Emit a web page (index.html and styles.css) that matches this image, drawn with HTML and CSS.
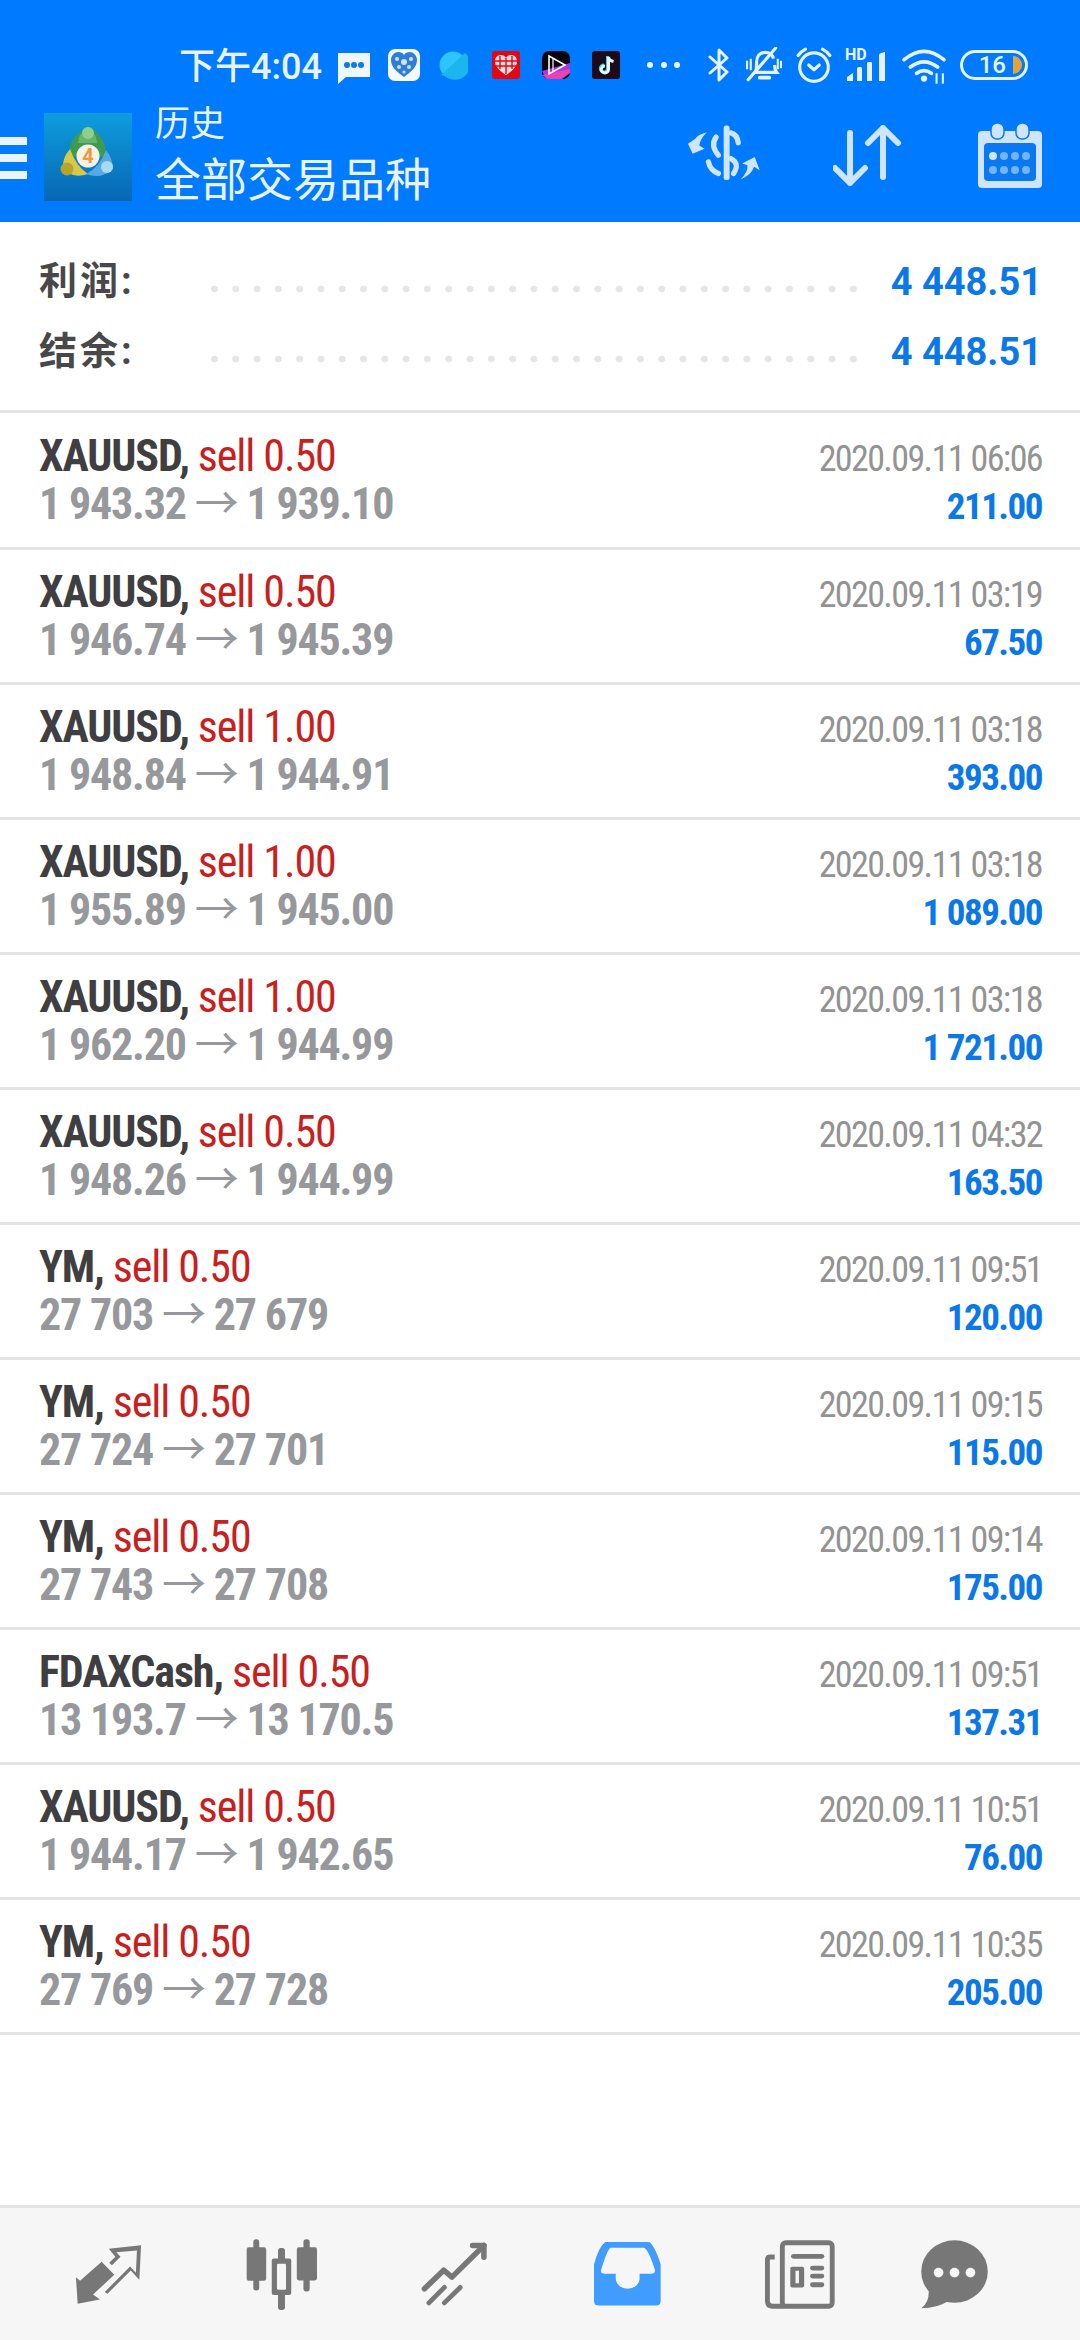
FILE: index.html
```html
<!DOCTYPE html>
<html lang="zh-CN">

<head>
    <meta charset="UTF-8">
    <meta name="viewport" content="width=device-width, initial-scale=1.0">
    <title>历史</title>
    <link rel="stylesheet" href="styles.css">
</head>

<body>
    <header class="top">
        <div class="status">
            <span class="clock">下午4:04</span>
            <svg class="s-msg" width="34" height="32" viewBox="0 0 34 32">
                <path d="M1 1h32v24H9l-8 7z" fill="#eef6ff" />
                <circle cx="10" cy="13" r="3" fill="#0a78f0" />
                <circle cx="17" cy="13" r="3" fill="#0a78f0" />
                <circle cx="24" cy="13" r="3" fill="#0a78f0" />
            </svg>
            <svg class="s-app1" width="32" height="32" viewBox="0 0 32 32">
                <rect width="32" height="32" rx="7" fill="#f4f9ff" />
                <path d="M16 28C9 23 3 18 3 11c0-5 4-8 7-8 3 0 5 1 6 3 1-2 3-3 6-3 3 0 7 3 7 8 0 7-6 12-13 17z" fill="#2f7fd8" />
                <circle cx="16" cy="13" r="3" fill="#cfe2f8" />
                <circle cx="9" cy="10" r="2" fill="#cfe2f8" />
                <circle cx="23" cy="10" r="2" fill="#cfe2f8" />
                <circle cx="11" cy="18" r="2" fill="#cfe2f8" />
                <circle cx="21" cy="18" r="2" fill="#cfe2f8" />
                <circle cx="16" cy="23" r="1.5" fill="#cfe2f8" />
            </svg>
            <svg class="s-app2" width="30" height="30" viewBox="0 0 30 30">
                <circle cx="15" cy="15" r="13.5" fill="#2ec4ff" />
                <path d="M3 25L27 3a13.5 13.5 0 0 1-20 23z" fill="#1cb5ee" />
            </svg>
            <svg class="s-app3" width="28" height="28" viewBox="0 0 28 28">
                <rect width="28" height="28" rx="3" fill="#e30613" />
                <path d="M14 24C8 20 3 16 3 10c0-4 3-6 6-6 2 0 4 1 5 3 1-2 3-3 5-3 3 0 6 2 6 6 0 6-5 10-11 14z" fill="#fbdde0" />
                <path d="M14 7v16M8 5v13M20 5v13M3 10h22M4 15h20" stroke="#e30613" stroke-width="1.4" />
            </svg>
            <svg class="s-app4" width="28" height="28" viewBox="0 0 28 28">
                <rect width="28" height="28" rx="7" fill="#08040c" />
                <path d="M0 20L28 12V20L16 28H4z" fill="#a43be0" />
                <path d="M0 24L28 18V22L20 28H6z" fill="#ee3fb4" />
                <path d="M7 5l16 9-16 9z" fill="none" stroke="#fff" stroke-width="1.6" />
                <path d="M11 8v12" stroke="#fff" stroke-width="1.2" />
            </svg>
            <svg class="s-app5" width="28" height="28" viewBox="0 0 28 28">
                <rect width="28" height="28" rx="3" fill="#1c0b1d" />
                <path d="M15.5 5v12.5a3.6 3.6 0 1 1-3.6-3.6" fill="none" stroke="#26e0e6" stroke-width="3" />
                <path d="M16.5 6v12.5a3.6 3.6 0 1 1-3.6-3.6M16.5 6c.5 2.5 2.500 4 5 4.500" fill="none" stroke="#f4f4f4" stroke-width="3" />
            </svg>
            <svg class="s-more" width="34" height="6" viewBox="0 0 34 6">
                <circle cx="3" cy="3" r="3" fill="#eaf4ff" />
                <circle cx="17" cy="3" r="3" fill="#eaf4ff" />
                <circle cx="30" cy="3" r="3" fill="#eaf4ff" />
            </svg>
            <svg class="s-bt" width="22" height="34" viewBox="0 0 22 34">
                <path d="M2 9l17 15-8 8V2l8 8L2 25" fill="none" stroke="#e6f2ff" stroke-width="3" stroke-linecap="round" stroke-linejoin="round" />
            </svg>
            <svg class="s-bell" width="36" height="36" viewBox="0 0 34 34">
                <path d="M9 24c1-3 1-6 1-10 0-5 3-9 8-9 4 0 7 2 8 6M27 17c0 3 .5 5 2 7H8" fill="none" stroke="#e6f2ff" stroke-width="3" />
                <path d="M13 29h9" stroke="#e6f2ff" stroke-width="3.500" stroke-linecap="round" />
                <path d="M2 31L28 1" stroke="#e6f2ff" stroke-width="3" stroke-linecap="round" />
                <path d="M1 13v8M4.500 11v11M30 11v10M33 13v7" stroke="#e6f2ff" stroke-width="2" />
            </svg>
            <svg class="s-alarm" width="36" height="36" viewBox="0 0 34 34">
                <circle cx="17" cy="19" r="13.500" fill="none" stroke="#e6f2ff" stroke-width="3" />
                <path d="M12 17l5 4.500 5-4.500" fill="none" stroke="#e6f2ff" stroke-width="3" stroke-linecap="round" stroke-linejoin="round" />
                <path d="M2 8q3-4 7-6M32 8q-3-4-7-6" fill="none" stroke="#e6f2ff" stroke-width="3" stroke-linecap="round" />
            </svg>
            <div class="s-net">
                <span class="hd">HD</span>
                <svg width="42" height="30" viewBox="0 0 40 30">
                    <path d="M1 29v-4l6-4v8z M11 29V17q0-2 2-2h2q1 0 1 2v12z M21 29V11q0-1 2-1h2q1 0 1 1v18z M33 29V3q0-1 2-2l4-1v29z" fill="#e6f2ff" />
                </svg>
            </div>
            <svg class="s-wifi" width="44" height="36" viewBox="0 0 42 34">
                <path d="M2 11Q21-5 40 11M8 18q13-10 26 0M14 24q7-5 14 0" fill="none" stroke="#e6f2ff" stroke-width="3.500" stroke-linecap="round" />
                <circle cx="21" cy="29" r="3" fill="#e6f2ff" />
                <path d="M33 24v10M39 24v10" stroke="#e6f2ff" stroke-width="2" />
            </svg>
            <div class="battery"><span>16</span><i class="battery-fill"></i></div>
        </div>
        <div class="appbar">
            <div class="burger"><i></i><i></i><i></i></div>
            <svg class="logo" width="88" height="88" viewBox="0 0 88 88">
                <defs>
                    <linearGradient id="logoBg" x1="0" y1="0" x2="0" y2="1">
                        <stop offset="0" stop-color="#0e9ddc" />
                        <stop offset="1" stop-color="#0767b4" />
                    </linearGradient>
                </defs>
                <rect width="88" height="88" fill="url(#logoBg)" />
                <path d="M26 44q-3-21 18-29 20 8 17 29z" fill="#3d9a52" />
                <path d="M34 30q0-10 10-13 9 3 9 13z" fill="#67b56c" />
                <circle cx="44" cy="20" r="6" fill="#8fcf8e" />
                <path d="M26 36q-8 9-7 20 10 10 25 5-12-8-18-25z" fill="#d8c84a" />
                <circle cx="23" cy="56" r="6.500" fill="#b7a42e" />
                <path d="M62 37q7 9 7 19-12 11-27 5 14-7 20-24z" fill="#56a9e2" />
                <circle cx="63" cy="54" r="6" fill="#a9daf3" />
                <circle cx="44" cy="43" r="11.500" fill="#f8f1e6" />
                <text class="logo-num" x="44" y="50" text-anchor="middle">4</text>
            </svg>
            <div class="titles">
                <div class="title-small">历史</div>
                <div class="title-big">全部交易品种</div>
            </div>
            <svg class="act-money" width="72" height="60" viewBox="48 48 218 170">
                <rect x="156" y="50" width="18" height="165" rx="8" fill="#cfe4ff" />
                <path d="M178 72q20 6 22 30M133 85q-18 25 7 55M178 150q28 15 8 45M110 160q5 25 30 35" fill="none" stroke="#cfe4ff" stroke-width="16" stroke-linecap="round" />
                <path d="M105 70q-30 8-35 20L48 105l14 30 36-15-16-10q3-20 23-40z" fill="#cfe4ff" />
                <path d="M207 213q23-23 21-43l-16-5 38-20 15 40-17-10q-8 25-41 38z" fill="#cfe4ff" />
            </svg>
            <svg class="act-sort" width="70" height="62" viewBox="0 0 70 62">
                <path d="M17 8v50M2 43l15 15 15-15M50 3v49M35 18L50 3l15 15" fill="none" stroke="#cfe4ff" stroke-width="6" stroke-linecap="round" stroke-linejoin="round" />
            </svg>
            <svg class="act-cal" width="64" height="66" viewBox="0 0 64 66">
                <rect y="9" width="64" height="57" rx="4" fill="#cfe4ff" />
                <rect x="6" y="21" width="52" height="38" rx="4" fill="#0a78f0" />
                <rect x="13" y="1" width="13" height="16" rx="6" fill="#cfe4ff" stroke="#0a78f0" stroke-width="1.500" />
                <rect x="38" y="1" width="13" height="16" rx="6" fill="#cfe4ff" stroke="#0a78f0" stroke-width="1.500" />
                <circle cx="15" cy="34" r="4" fill="#cfe4ff" />
                <circle cx="26" cy="34" r="4" fill="#74b3ff" />
                <circle cx="37" cy="34" r="4" fill="#74b3ff" />
                <circle cx="48" cy="34" r="4" fill="#74b3ff" />
                <circle cx="15" cy="48" r="4" fill="#74b3ff" />
                <circle cx="26" cy="48" r="4" fill="#74b3ff" />
                <circle cx="37" cy="48" r="4" fill="#74b3ff" />
                <circle cx="48" cy="48" r="4" fill="#74b3ff" />
            </svg>
        </div>
    </header>

    <section class="summary">
        <div class="sum-row"><span class="sum-label">利润:</span><span class="sum-dots"></span><span class="sum-value">4 448.51</span></div>
        <div class="sum-row"><span class="sum-label">结余:</span><span class="sum-dots"></span><span class="sum-value">4 448.51</span></div>
    </section>

    <main class="deals">
        <div class="deal">
            <div class="deal-left">
                <div class="deal-head"><b>XAUUSD,</b> <span class="sell">sell 0.50</span></div>
                <div class="deal-price">1 943.32 <span class="arrow">→</span> 1 939.10</div>
            </div>
            <div class="deal-right">
                <div class="deal-date">2020.09.11 06:06</div>
                <div class="deal-profit">211.00</div>
            </div>
        </div>
        <div class="deal">
            <div class="deal-left">
                <div class="deal-head"><b>XAUUSD,</b> <span class="sell">sell 0.50</span></div>
                <div class="deal-price">1 946.74 <span class="arrow">→</span> 1 945.39</div>
            </div>
            <div class="deal-right">
                <div class="deal-date">2020.09.11 03:19</div>
                <div class="deal-profit">67.50</div>
            </div>
        </div>
        <div class="deal">
            <div class="deal-left">
                <div class="deal-head"><b>XAUUSD,</b> <span class="sell">sell 1.00</span></div>
                <div class="deal-price">1 948.84 <span class="arrow">→</span> 1 944.91</div>
            </div>
            <div class="deal-right">
                <div class="deal-date">2020.09.11 03:18</div>
                <div class="deal-profit">393.00</div>
            </div>
        </div>
        <div class="deal">
            <div class="deal-left">
                <div class="deal-head"><b>XAUUSD,</b> <span class="sell">sell 1.00</span></div>
                <div class="deal-price">1 955.89 <span class="arrow">→</span> 1 945.00</div>
            </div>
            <div class="deal-right">
                <div class="deal-date">2020.09.11 03:18</div>
                <div class="deal-profit">1 089.00</div>
            </div>
        </div>
        <div class="deal">
            <div class="deal-left">
                <div class="deal-head"><b>XAUUSD,</b> <span class="sell">sell 1.00</span></div>
                <div class="deal-price">1 962.20 <span class="arrow">→</span> 1 944.99</div>
            </div>
            <div class="deal-right">
                <div class="deal-date">2020.09.11 03:18</div>
                <div class="deal-profit">1 721.00</div>
            </div>
        </div>
        <div class="deal">
            <div class="deal-left">
                <div class="deal-head"><b>XAUUSD,</b> <span class="sell">sell 0.50</span></div>
                <div class="deal-price">1 948.26 <span class="arrow">→</span> 1 944.99</div>
            </div>
            <div class="deal-right">
                <div class="deal-date">2020.09.11 04:32</div>
                <div class="deal-profit">163.50</div>
            </div>
        </div>
        <div class="deal">
            <div class="deal-left">
                <div class="deal-head"><b>YM,</b> <span class="sell">sell 0.50</span></div>
                <div class="deal-price">27 703 <span class="arrow">→</span> 27 679</div>
            </div>
            <div class="deal-right">
                <div class="deal-date">2020.09.11 09:51</div>
                <div class="deal-profit">120.00</div>
            </div>
        </div>
        <div class="deal">
            <div class="deal-left">
                <div class="deal-head"><b>YM,</b> <span class="sell">sell 0.50</span></div>
                <div class="deal-price">27 724 <span class="arrow">→</span> 27 701</div>
            </div>
            <div class="deal-right">
                <div class="deal-date">2020.09.11 09:15</div>
                <div class="deal-profit">115.00</div>
            </div>
        </div>
        <div class="deal">
            <div class="deal-left">
                <div class="deal-head"><b>YM,</b> <span class="sell">sell 0.50</span></div>
                <div class="deal-price">27 743 <span class="arrow">→</span> 27 708</div>
            </div>
            <div class="deal-right">
                <div class="deal-date">2020.09.11 09:14</div>
                <div class="deal-profit">175.00</div>
            </div>
        </div>
        <div class="deal">
            <div class="deal-left">
                <div class="deal-head"><b>FDAXCash,</b> <span class="sell">sell 0.50</span></div>
                <div class="deal-price">13 193.7 <span class="arrow">→</span> 13 170.5</div>
            </div>
            <div class="deal-right">
                <div class="deal-date">2020.09.11 09:51</div>
                <div class="deal-profit">137.31</div>
            </div>
        </div>
        <div class="deal">
            <div class="deal-left">
                <div class="deal-head"><b>XAUUSD,</b> <span class="sell">sell 0.50</span></div>
                <div class="deal-price">1 944.17 <span class="arrow">→</span> 1 942.65</div>
            </div>
            <div class="deal-right">
                <div class="deal-date">2020.09.11 10:51</div>
                <div class="deal-profit">76.00</div>
            </div>
        </div>
        <div class="deal">
            <div class="deal-left">
                <div class="deal-head"><b>YM,</b> <span class="sell">sell 0.50</span></div>
                <div class="deal-price">27 769 <span class="arrow">→</span> 27 728</div>
            </div>
            <div class="deal-right">
                <div class="deal-date">2020.09.11 10:35</div>
                <div class="deal-profit">205.00</div>
            </div>
        </div>
    </main>

    <nav class="tabs">
        <svg class="tab" width="67" height="61" viewBox="218 188 194 178">
            <path d="M220 285l12 10 63-55 37 38-62 57 20 15-65 12z" fill="#777" />
            <path d="M316 202l94-10-5 100-25-27-68 68-8-5 74-74 17 18 3-65-60 5 12 13-25 25-8-7 18-18z" fill="#777" />
        </svg>
        <svg class="tab" width="71" height="71" viewBox="714 174 204 204">
            <rect x="716" y="198" width="56" height="96" rx="6" fill="#777" />
            <rect x="735" y="175" width="17" height="147" rx="8" fill="#777" />
            <rect x="806" y="200" width="20" height="178" rx="8" fill="#777" />
            <rect x="788" y="230" width="56" height="105" rx="6" fill="#777" />
            <rect x="803" y="245" width="26" height="75" rx="4" fill="#f6f6f6" />
            <rect x="860" y="198" width="58" height="95" rx="6" fill="#777" />
            <rect x="879" y="175" width="18" height="150" rx="8" fill="#777" />
        </svg>
        <svg class="tab" width="66" height="64" viewBox="1222 180 192 186">
            <path d="M1232 316l56-54 24 20 93-92" fill="none" stroke="#777" stroke-width="16" stroke-linecap="round" stroke-linejoin="round" />
            <path d="M1372 190h33v34" fill="none" stroke="#777" stroke-width="16" stroke-linecap="round" stroke-linejoin="round" />
            <path d="M1245 357l45-45M1290 357l46-45" fill="none" stroke="#777" stroke-width="14" stroke-linecap="round" />
        </svg>
        <svg class="tab" width="67" height="64" viewBox="158 182 191 182">
            <path fill-rule="evenodd" d="M190 182h125q15 8 33 63v105q0 13-13 13H172q-14 0-14-13V245q14-50 32-63z M205 198q-10 7-27 64-2 10 12 10h30v13a34 30 0 0 0 68 0v-13h32q12 0 12-10-20-62-32-64z" fill="#409cff" />
        </svg>
        <svg class="tab" width="70" height="69" viewBox="657 173 202 199">
            <rect x="707" y="181" width="144" height="183" rx="10" fill="none" stroke="#777" stroke-width="14" />
            <path d="M685 222h-13q-8 0-8 8v120q0 14 14 14h36" fill="none" stroke="#777" stroke-width="14" />
            <rect x="732" y="213" width="96" height="14" rx="7" fill="#777" />
            <path fill-rule="evenodd" d="M735 250h30q5 0 5 5v50q0 5-5 5h-30q-5 0-5-5v-50q0-5 5-5z M745 262v36h10v-36z" fill="#777" />
            <rect x="787" y="247" width="41" height="14" rx="7" fill="#777" />
            <rect x="787" y="270" width="41" height="14" rx="7" fill="#777" />
            <rect x="787" y="295" width="41" height="14" rx="7" fill="#777" />
        </svg>
        <svg class="tab" width="67" height="69" viewBox="1103 173 192 199">
            <ellipse cx="1199" cy="264" rx="96" ry="90" fill="#777" />
            <path d="M1125 320q0 35-22 50 47 0 77-20z" fill="#777" />
            <circle cx="1153" cy="267" r="14" fill="#f6f6f6" />
            <circle cx="1199" cy="267" r="14" fill="#f6f6f6" />
            <circle cx="1245" cy="267" r="14" fill="#f6f6f6" />
        </svg>
    </nav>
</body>

</html>
```

FILE: styles.css
```css
html,
body {
    margin: 0;
    height: 2340px;
    overflow: hidden;
}

body {
    width: 1080px;
    display: flex;
    flex-direction: column;
    background-color: #fff;
    font-family: Roboto, "Noto Sans CJK SC", sans-serif;
    font-stretch: 75%;
}

.top {
    height: 222px;
    background-color: #007aff;
    color: #e8f3ff;
    font-stretch: 100%;
}

/* status bar */
.status {
    height: 100px;
    padding: 46px 0 0 179px;
    box-sizing: border-box;
    display: flex;
    align-items: flex-start;
}

.clock {
    width: 140px;
    font-size: 36px;
    line-height: 42px;
    font-weight: 500;
    white-space: nowrap;
}

.s-msg { margin: 6px 0 0 18px; }
.s-app1 { margin: 3px 0 0 17px; }
.s-app2 { margin: 4px 0 0 18px; }
.s-app3 { margin: 5px 0 0 24px; }
.s-app4 { margin: 5px 0 0 22px; }
.s-app5 { margin: 5px 0 0 22px; }
.s-more { margin: 16px 0 0 27px; }
.s-bt { margin: 2px 0 0 27px; }
.s-bell { margin: 1px 0 0 16px; }
.s-alarm { margin: 1px 0 0 14px; }

.s-net {
    position: relative;
    width: 42px;
    height: 34px;
    margin: 2px 0 0 13px;
}

.s-net svg {
    position: absolute;
    left: 0;
    bottom: 0;
}

.hd {
    position: absolute;
    left: 0;
    top: -2px;
    font-size: 16px;
    line-height: 18px;
    font-weight: 700;
}

.s-wifi { margin: 2px 0 0 15px; }

.battery {
    width: 68px;
    height: 30px;
    margin: 4px 0 0 14px;
    box-sizing: border-box;
    border: 3px solid #e6f2ff;
    border-radius: 15px;
    display: flex;
    align-items: center;
    justify-content: flex-end;
    padding-right: 3px;
    font-size: 24px;
    font-weight: 500;
}

.battery-fill {
    width: 9px;
    height: 18px;
    margin-left: 7px;
    background-color: #e3a23b;
    border-radius: 0 9px 9px 0;
}

/* app bar */
.appbar {
    height: 122px;
    display: flex;
    align-items: flex-start;
}

.burger {
    width: 27px;
    margin-top: 37px;
    display: flex;
    flex-direction: column;
    gap: 9px;
}

.burger i {
    height: 8px;
    background-color: #eaf4ff;
}

.logo { margin: 13px 0 0 17px; }

.titles { margin-left: 23px; }

.title-small {
    margin-top: 2px;
    font-size: 35px;
    line-height: 46px;
}

.title-big {
    width: 276px;
    margin-top: 2px;
    font-size: 46px;
    line-height: 60px;
    white-space: nowrap;
}

.logo-num {
    font-family: Roboto, sans-serif;
    font-size: 20px;
    font-weight: 700;
    fill: #ec9a3c;
}

.act-money { margin: 23px 0 0 257px; }
.act-sort { margin: 25px 0 0 73px; }
.act-cal { margin: 22px 0 0 75px; }

/* summary */
.summary {
    height: 191px;
    padding: 22px 38px 0 39px;
    box-sizing: border-box;
    border-bottom: 3px solid #e4e4e4;
    font-stretch: 100%;
}

.sum-row {
    height: 70px;
    display: flex;
    align-items: center;
}

.sum-label {
    width: 168px;
    padding-bottom: 3px;
    font-size: 38px;
    font-weight: 700;
    letter-spacing: 3px;
    color: #48484a;
}

.sum-dots {
    flex: 1;
    height: 8px;
    margin: 20px 0 0 4px;
    background: radial-gradient(circle at 3.500px 4px, #e6e6e6 3.200px, transparent 3.700px) 0 0 / 21.3px 8px repeat-x;
}

.sum-value {
    width: 183px;
    padding-top: 6px;
    text-align: right;
    font-size: 38px;
    font-weight: 700;
    color: #0a78e8;
    white-space: nowrap;
}

/* deals list */
.deals {
    flex: 1;
}

.deal {
    height: 135px;
    padding: 0 38px 0 39px;
    box-sizing: border-box;
    border-bottom: 3px solid #e4e4e4;
    display: flex;
    justify-content: space-between;
    align-items: center;
}

.deal:first-child {
    height: 137px;
}

.deal-head {
    font-size: 44px;
    line-height: 48px;
    letter-spacing: -1.1px;
    color: #3f3f42;
}

.deal-head b {
    font-weight: 700;
}

.sell {
    color: #c91f1f;
}

.deal-price {
    font-size: 44px;
    line-height: 48px;
    letter-spacing: -1.2px;
    font-weight: 700;
    color: #97989c;
}

.arrow {
    font-weight: 400;
}

.deal-right {
    padding-top: 6px;
    text-align: right;
}

.deal-date {
    font-size: 36px;
    line-height: 48px;
    letter-spacing: -1.6px;
    color: #939393;
}

.deal-profit {
    font-size: 37px;
    line-height: 48px;
    letter-spacing: -1.5px;
    font-weight: 700;
    color: #0a78e8;
}

/* bottom tabs */
.tabs {
    height: 135px;
    box-sizing: border-box;
    padding-left: 21px;
    background-color: #f6f6f6;
    border-top: 3px solid #e4e4e4;
    display: grid;
    grid-template-columns: 174px 172px 174px 172px 174px 134px;
    align-items: center;
    justify-items: center;
}
```
